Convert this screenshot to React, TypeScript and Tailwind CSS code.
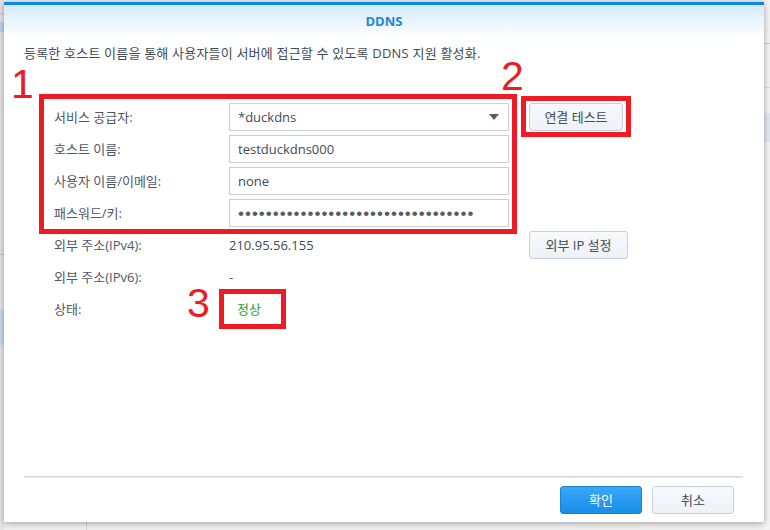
import React from "react";

const labelCls = "w-[175px] shrink-0 text-[13px] leading-[18px] text-[#4e5863]";
const valueCls = "text-[13px] leading-[18px] text-[#414b55]";

const LightButton: React.FC<{ label: string; width: string }> = ({ label, width }) => (
	<div
		className={`${width} h-[28px] shrink-0 rounded-[3px] border border-[#c6d1dc] bg-linear-to-b from-[#f7fafd] to-[#edf2f7] flex items-center justify-center text-[13px] leading-none text-[#414b55]`}
	>
		{label}
	</div>
);

const Field: React.FC<{ label: string; children: React.ReactNode }> = ({ label, children }) => (
	<div className="flex items-center">
		<span className={labelCls}>{label}</span>
		<div className="w-[280px] h-[28px] border border-[#c8d1da] bg-white flex items-center pl-[8px] pr-[9px]">
			{children}
		</div>
	</div>
);

const Digit: React.FC<{ n: string; pos: string }> = ({ n, pos }) => (
	<span
		className={`absolute ${pos} font-['Liberation_Sans',sans-serif] text-[41px] leading-none text-[#ed1c24]`}
	>
		{n}
	</span>
);

export default function App() {
	return (
		<div className="w-[770px] h-[530px] overflow-hidden bg-[#eeeeee] flex font-['Open_Sans','Noto_Sans_CJK_KR',sans-serif]">
			{/* app behind, left edge */}
			<div className="w-[4px] shrink-0 flex flex-col bg-[#e4e4e4]">
				<div className="h-[13px]" />
				<div className="h-px bg-[#c8c8c8]" />
				<div className="h-[8px]" />
				<div className="h-[10px] bg-[#b9d3ee]" />
				<div className="h-[222px]" />
				<div className="h-px bg-[#c8c8c8]" />
				<div className="h-[54px]" />
				<div className="h-[36px] bg-[#c7dbef]" />
			</div>

			<div className="w-[760px] shrink-0 flex flex-col">
				<div className="h-[2px] shrink-0" />

				{/* dialog */}
				<div className="relative w-[760px] h-[520px] shrink-0 bg-white shadow-[0_1px_6px_rgba(0,0,0,0.35)] flex flex-col">
					<div className="h-[3px] bg-[#0a86e3]" />
					<div className="h-[33px] bg-linear-to-b from-[#d6eafb] to-white flex items-center justify-center">
						<span className="text-[13px] font-bold leading-none text-[#1d86dc]">DDNS</span>
					</div>

					<div className="pl-[20px] flex flex-col">
						<p className="mt-[6px] text-[13px] leading-[18px] tracking-[0.2px] text-[#414b55]">
							등록한 호스트 이름을 통해 사용자들이 서버에 접근할 수 있도록 DDNS 지원 활성화.
						</p>

						<div className="mt-[32px] ml-[15px] flex items-start">
							{/* annotation box 1 */}
							<div className="border-[5px] border-[#ed1c24] pt-[4px] pl-[10px] pr-[3px] pb-[2px] flex flex-col gap-[4px]">
								<Field label="서비스 공급자:">
									<span className={`${valueCls} flex-1`}>*duckdns</span>
									<svg width="10" height="6" viewBox="0 0 10 6">
										<path d="M0 0h10L5 6z" fill="#555d66" />
									</svg>
								</Field>
								<Field label="호스트 이름:">
									<span className={valueCls}>testduckdns000</span>
								</Field>
								<Field label="사용자 이름/이메일:">
									<span className={valueCls}>none</span>
								</Field>
								<Field label="패스워드/키:">
									<span className="font-['Liberation_Sans',sans-serif] text-[17px] leading-none tracking-[1px] text-[#555d66]">
										{"•".repeat(34)}
									</span>
								</Field>
							</div>

							{/* annotation box 2 */}
							<div className="ml-[4px] mt-[2px] border-[5px] border-[#ed1c24] pt-[2px] pl-[3px] pr-[3px] pb-[1px]">
								<LightButton label="연결 테스트" width="w-[94px]" />
							</div>
						</div>

						<div className="ml-[30px] -mt-[3px] flex items-center h-[28px]">
							<span className={labelCls}>외부 주소(IPv4):</span>
							<span className={`${valueCls} w-[300px] shrink-0`}>210.95.56.155</span>
							<LightButton label="외부 IP 설정" width="w-[99px]" />
						</div>

						<div className="ml-[30px] mt-[4px] flex items-center h-[28px]">
							<span className={labelCls}>외부 주소(IPv6):</span>
							<span className={valueCls}>-</span>
						</div>

						<div className="ml-[30px] -mt-[2px] flex items-center h-[40px]">
							<span className={labelCls}>상태:</span>
							{/* annotation box 3 */}
							<div className="-ml-[10px] w-[67px] h-[40px] border-[5px] border-[#ed1c24] flex items-center pl-[13px]">
								<span className="text-[13px] leading-[18px] text-[#2ea02e]">정상</span>
							</div>
						</div>
					</div>

					{/* footer */}
					<div className="mt-auto flex flex-col">
						<div className="ml-[20px] w-[719px] h-[2px] bg-linear-to-b from-[#d4d4d4] to-[#ececec]" />
						<div className="pt-[8px] pb-[8px] pr-[30px] flex justify-end gap-[10px]">
							<div className="w-[82px] h-[28px] rounded-[3px] border border-[#1a82d2] bg-linear-to-b from-[#38a8f8] to-[#168ee8] flex items-center justify-center text-[13px] leading-none text-white">
								확인
							</div>
							<LightButton label="취소" width="w-[82px]" />
						</div>
					</div>

					<Digit n="1" pos="left-[7px] top-[62px]" />
					<Digit n="2" pos="left-[497px] top-[54px]" />
					<Digit n="3" pos="left-[183px] top-[281px]" />
				</div>

				<div className="flex-1 flex">
					<div className="w-[82px]" />
					<div className="w-px bg-[#d0d0d0]" />
				</div>
			</div>

			{/* app behind, right edge */}
			<div className="flex-1 flex flex-col bg-[#f3f3f3]">
				<div className="h-[43px]" />
				<div className="h-px bg-[#cfcfcf]" />
				<div className="h-[43px]" />
				<div className="h-px bg-[#dcdcdc]" />
				<div className="h-[25px]" />
				<div className="h-[29px] bg-[#dfe7f0]" />
			</div>
		</div>
	);
}
